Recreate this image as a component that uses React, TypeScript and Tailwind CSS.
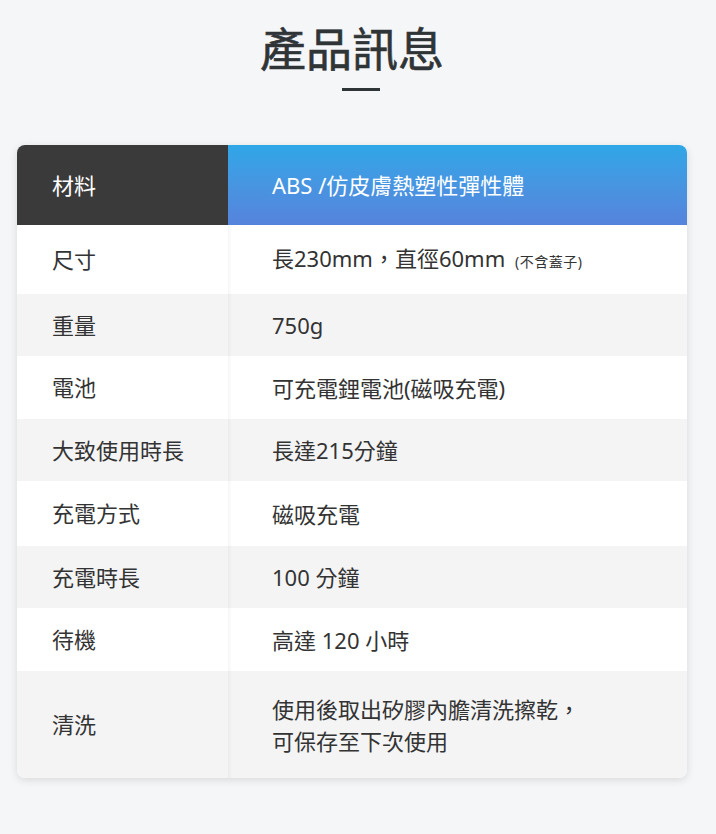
const rows: { label: string; value: React.ReactNode; h: string; alt: boolean }[] = [
  {
    label: "尺寸",
    value: (
      <>
        長230mm，直徑60mm{" "}
        <span className="ml-[4px] text-[14px] tracking-[0.5px]">(不含蓋子)</span>
      </>
    ),
    h: "h-[69px]",
    alt: false,
  },
  { label: "重量", value: "750g", h: "h-[62px]", alt: true },
  { label: "電池", value: "可充電鋰電池(磁吸充電)", h: "h-[63px]", alt: false },
  { label: "大致使用時長", value: "長達215分鐘", h: "h-[62px]", alt: true },
  { label: "充電方式", value: "磁吸充電", h: "h-[65px]", alt: false },
  { label: "充電時長", value: "100 分鐘", h: "h-[62px]", alt: true },
  { label: "待機", value: "高達 120 小時", h: "h-[63px]", alt: false },
  {
    label: "清洗",
    value: (
      <>
        使用後取出矽膠內膽清洗擦乾，
        <br />
        可保存至下次使用
      </>
    ),
    h: "h-[107px]",
    alt: true,
  },
];

export default function App() {
  return (
    <div
      className="min-h-[834px] bg-[#f5f6f8] pt-[16px] pb-14 text-[#333]"
      style={{ fontFamily: '"Noto Sans", "Noto Sans CJK TC", sans-serif' }}
    >
      <div className="w-[704px]">
        {/* Title */}
        <h1
          className="text-center text-[46px] leading-[60px] font-normal text-[#2f3437] [-webkit-text-stroke:0.6px_#2f3437]"
          style={{ fontFamily: '"Noto Sans CJK TC", sans-serif' }}
        >
          產品訊息
        </h1>
        <div className="mx-auto mt-[12px] h-[3px] w-[38px] translate-x-[9px] bg-[#2f3437]" />

        {/* Spec table */}
        <div className="mx-[17px] mt-[54px] overflow-hidden rounded-lg bg-white shadow-[0_2px_8px_rgba(0,0,0,0.12)]">
          <div className="flex h-[80px] text-[22px] text-white">
            <div className="flex w-[211px] items-center bg-[#3a3a3a] pl-[35px]">材料</div>
            <div className="flex flex-1 items-center bg-gradient-to-b from-[#2ea7e7] to-[#5583dc] pl-[44px]">
              ABS /仿皮膚熱塑性彈性體
            </div>
          </div>
          {rows.map((r) => (
            <div
              key={r.label}
              className={`flex ${r.h} text-[22px] ${r.alt ? "bg-[#f4f4f5]" : "bg-white"}`}
            >
              <div className="flex w-[211px] items-center pl-[35px]">{r.label}</div>
              <div className="flex flex-1 items-center pl-[44px] leading-[32px] shadow-[inset_4px_0_4px_-3px_rgba(0,0,0,0.06)]">
                <div>{r.value}</div>
              </div>
            </div>
          ))}
        </div>
      </div>
    </div>
  );
}
